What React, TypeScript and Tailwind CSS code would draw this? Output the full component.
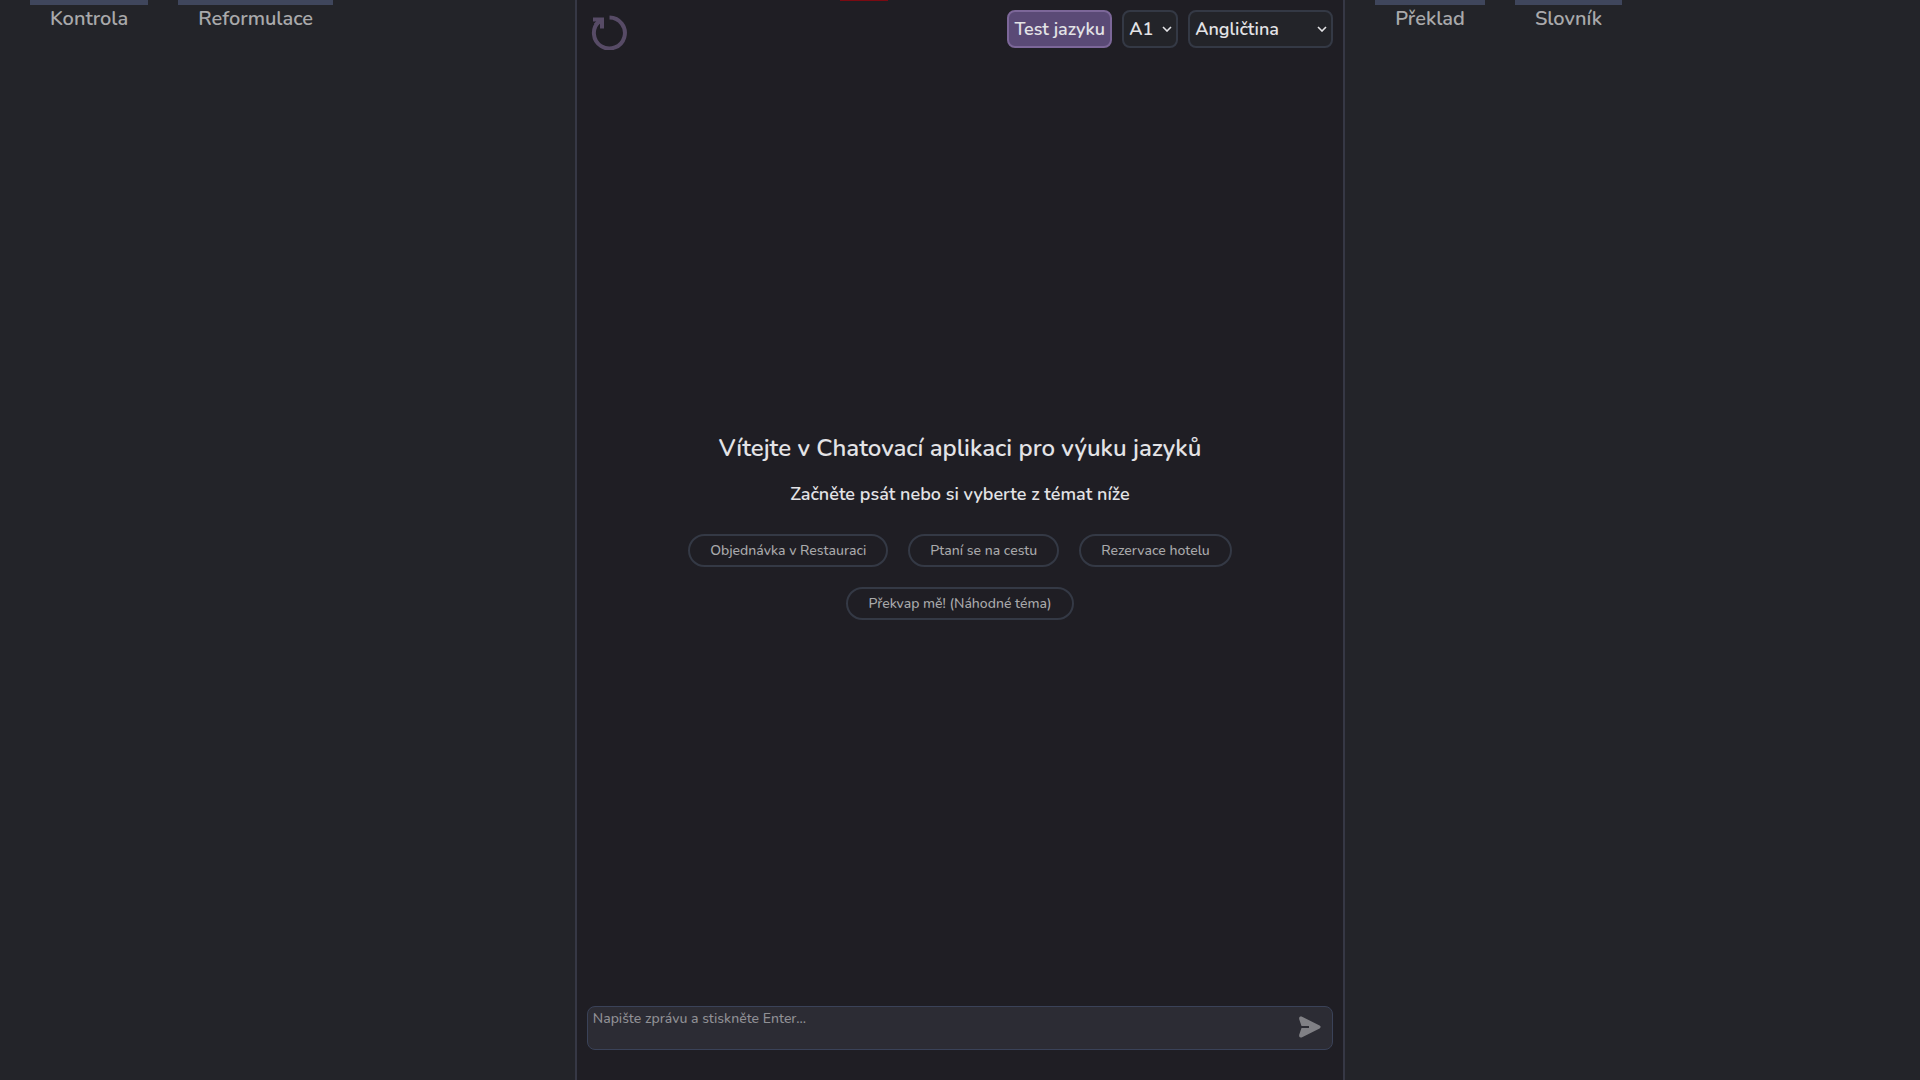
const levels = ["A1", "A2", "B1", "B2", "C1", "C2"];
const languages = ["Angličtina", "Němčina", "Francouzština", "Španělština"];
const topics = [
  "Objednávka v Restauraci",
  "Ptaní se na cestu",
  "Rezervace hotelu",
  "Překvap mě! (Náhodné téma)",
];

function SidePanel({ tabs }: { tabs: string[] }) {
  return (
    <aside className="min-w-0 flex-[3] bg-[#232429]">
      <nav className="flex gap-[30px] px-[30px]">
        {tabs.map((tab) => (
          <button
            key={tab}
            type="button"
            className="border-t-5 border-[#3f465c] px-5 text-xl leading-[27px] font-semibold text-[#a9a9ab]"
          >
            {tab}
          </button>
        ))}
      </nav>
    </aside>
  );
}

function Dropdown({ label, options, width }: { label: string; options: string[]; width: string }) {
  return (
    <div className={`relative h-[38px] ${width}`}>
      <select
        aria-label={label}
        className="size-full appearance-none rounded-lg border-2 border-[#343945] bg-[#232429] pr-5 pl-[5px] text-lg leading-6 font-semibold text-[#e3e3e6]"
      >
        {options.map((option) => (
          <option key={option}>{option}</option>
        ))}
      </select>
      <svg
        viewBox="0 0 10 6"
        className="pointer-events-none absolute top-4 right-[6px] h-[6px] w-[10px]"
        fill="none"
        stroke="#e3e3e6"
        strokeWidth="1.6"
      >
        <path d="M1 1l4 4 4-4" />
      </svg>
    </div>
  );
}

function ResetIcon() {
  return (
    <svg viewBox="0 0 40 40" className="size-10" fill="none" stroke="#574b66" strokeWidth="4">
      <path d="M22.5 7.500a15.500 15.500 0 1 1-10.500 4" />
      <path d="M6 7.500h11v11h-4v-5l-3 3-3-3 2.500-2H6z" fill="#574b66" stroke="none" />
    </svg>
  );
}

function SendIcon() {
  return (
    <svg viewBox="0 0 24 24" className="size-6" fill="#808085">
      <path d="M3.600 1.600 21.600 10.600Q23.800 12 21.600 13.400L3.600 22.400C1.700 23 .8 21.600 1.200 19.800L3.500 13.100H11V10.900H3.500L1.200 4.200C.8 2.400 1.700 1 3.600 1.600z" />
    </svg>
  );
}

export default function App() {
  return (
    <div className="flex h-screen bg-[#232429] font-['Nunito','Open_Sans',sans-serif] font-semibold">
      <SidePanel tabs={["Kontrola", "Reformulace"]} />
      <main className="flex min-w-0 flex-[4] flex-col border-x-2 border-[#363845] bg-[#1f1e24]">
        <div className="flex justify-center">
          <div className="mr-48 h-px w-12 bg-[#7a0a12]" />
        </div>
        <header className="flex items-start px-[10px] pt-[9px]">
          <button type="button" aria-label="Začít znovu">
            <ResetIcon />
          </button>
          <div className="ml-auto flex gap-[10px]">
            <button
              type="button"
              className="h-[38px] w-[105px] rounded-lg border-2 border-[#7c6799] bg-[#5a4a76] text-lg leading-6 text-[#e3e3e6]"
            >
              Test jazyku
            </button>
            <Dropdown label="Úroveň" options={levels} width="w-14" />
            <Dropdown label="Jazyk" options={languages} width="w-[145px]" />
          </div>
        </header>
        <section className="flex flex-1 flex-col items-center justify-center pb-1 text-center text-[#e3e3e6]">
          <h1 className="text-2xl leading-8 font-semibold">
            Vítejte v Chatovací aplikaci pro výuku jazyků
          </h1>
          <h2 className="mt-4 text-lg leading-7 font-semibold">
            Začněte psát nebo si vyberte z témat níže
          </h2>
          <div className="mt-[26px] flex max-w-[600px] flex-wrap justify-center gap-5">
            {topics.map((topic) => (
              <button
                key={topic}
                type="button"
                className="h-[33px] rounded-full border-2 border-[#343945] px-5 text-sm font-medium text-[#a9a9ab]"
              >
                {topic}
              </button>
            ))}
          </div>
        </section>
        <form className="mx-[10px] mb-[30px] flex h-11 items-center rounded-lg border border-[#3a4258] bg-[#2c2c34] pr-[10px]">
          <textarea
            aria-label="Zpráva"
            placeholder="Napište zprávu a stiskněte Enter..."
            className="h-full flex-1 resize-none bg-transparent px-[5px] pt-[2px] text-sm font-medium text-[#e3e3e6] outline-none placeholder:text-[#909095]"
          />
          <button type="button" aria-label="Odeslat" className="pb-[2px]">
            <SendIcon />
          </button>
        </form>
      </main>
      <SidePanel tabs={["Překlad", "Slovník"]} />
    </div>
  );
}
